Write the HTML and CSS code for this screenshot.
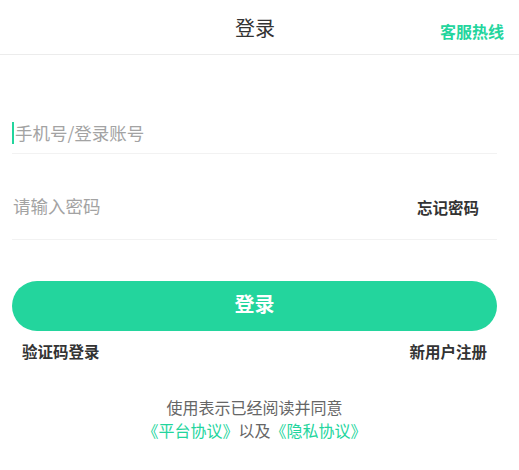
FILE: index.html
```html
<!DOCTYPE html>
<html lang="zh">
<head>
<meta charset="utf-8">
<link rel="stylesheet" href="styles.css">
</head>
<body>
<header class="topbar">
  <h1 class="title">登录</h1>
  <a class="hotline">客服热线</a>
</header>
<main class="form">
  <div class="field field-account">
    <span class="caret"></span><span class="placeholder">手机号/登录账号</span>
  </div>
  <div class="field field-password">
    <span class="placeholder">请输入密码</span>
    <a class="forgot">忘记密码</a>
  </div>
  <button class="submit">登录</button>
  <div class="links">
    <a class="link">验证码登录</a>
    <a class="link">新用户注册</a>
  </div>
  <p class="agree">使用表示已经阅读并同意<br><span class="green">《平台协议》</span>以及<span class="green">《隐私协议》</span></p>
</main>
</body>
</html>
```
FILE: styles.css
```css
* { box-sizing: border-box; }
html, body { margin: 0; padding: 0; background: #fff; }
body {
  width: 519px;
  font-family: "Noto Sans CJK SC", "Noto Sans", sans-serif;
  color: #333;
}
.topbar {
  height: 55px;
  border-bottom: 1px solid #ececec;
  display: flex;
  align-items: center;
  justify-content: center;
  position: relative;
  padding-right: 9px;
}
.title {
  margin: 0;
  font-size: 20px;
  font-weight: 400;
  color: #333;
  line-height: 1;
  padding-top: 2px;
}
.hotline {
  position: absolute;
  right: 15px;
  top: 19px;
  font-size: 16px;
  font-weight: 700;
  color: #23d59d;
  line-height: 24px;
}
.form {
  padding: 0 22px 0 12px;
}
.field {
  display: flex;
  align-items: center;
  border-bottom: 1px solid #f2f2f2;
  font-size: 17.5px;
}
.field-account {
  margin-top: 58px;
  height: 41px;
  padding-bottom: 1px;
}
.caret {
  width: 2px;
  height: 22px;
  background: #23d59d;
}
.placeholder {
  color: #a3a3a3;
  padding-left: 1px;
}
.field-password {
  height: 86px;
  padding-top: 17px;
  justify-content: space-between;
}
.forgot {
  font-size: 15.5px;
  font-weight: 700;
  color: #333;
  margin-right: 18px;
  padding-top: 3px;
}
.submit {
  display: block;
  width: 100%;
  height: 50px;
  margin-top: 41px;
  border: 0;
  border-radius: 25px;
  background: #23d59d;
  color: #fff;
  font-family: inherit;
  font-size: 20px;
  font-weight: 700;
  padding: 0 0 5px;
}
.links {
  display: flex;
  justify-content: space-between;
  padding: 0 10px;
  margin-top: 9px;
  line-height: 22px;
}
.link {
  font-size: 15.5px;
  font-weight: 700;
  color: #333;
}
.agree {
  margin: 34px 0 0;
  text-align: center;
  font-size: 16px;
  line-height: 23px;
  color: #666;
}
.green { color: #23d59d; }
```
